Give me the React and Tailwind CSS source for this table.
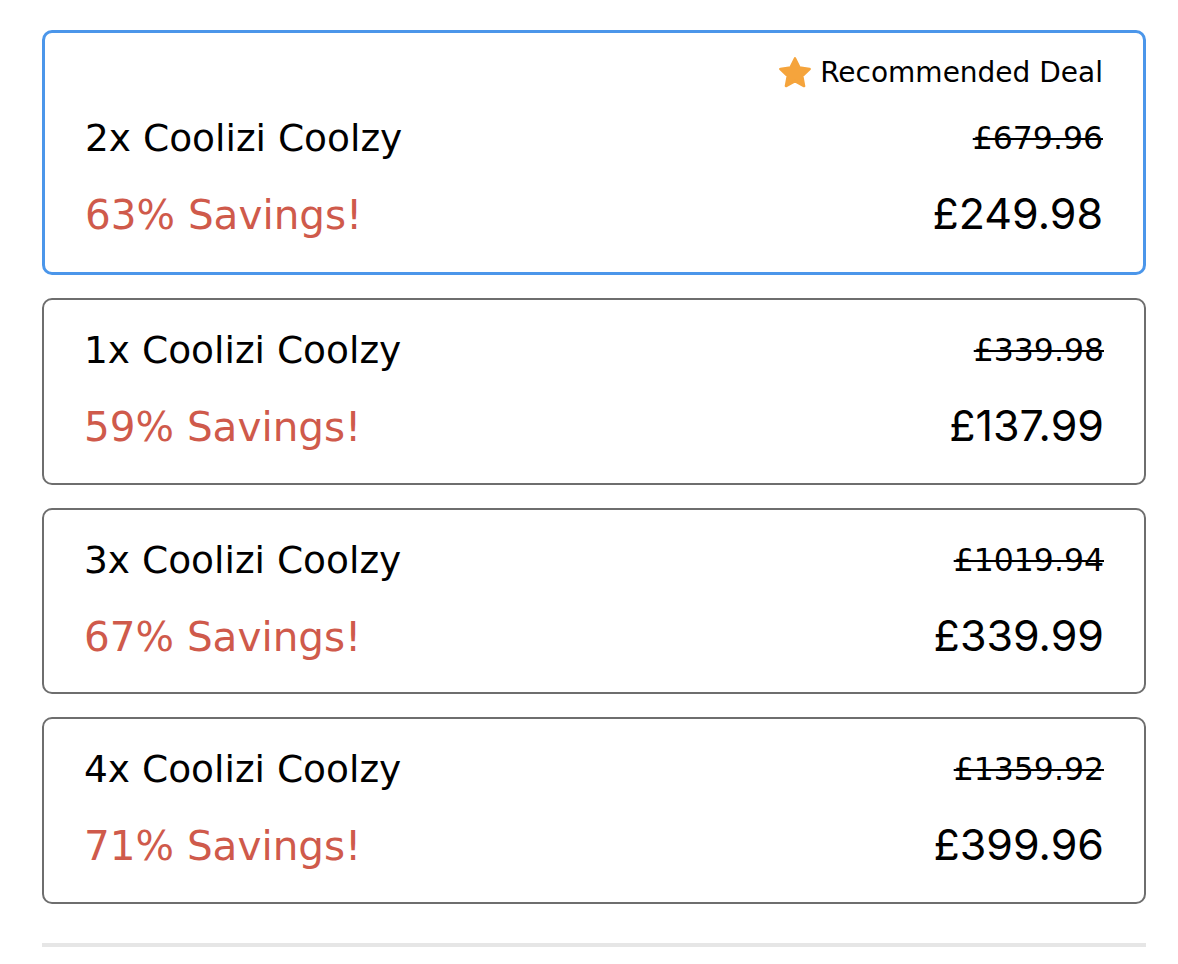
import React from "react";

const deals = [
  { qty: "2x Coolizi Coolzy", old: "£679.96", save: "63% Savings!", price: "£249.98", rec: true },
  { qty: "1x Coolizi Coolzy", old: "£339.98", save: "59% Savings!", price: "£137.99" },
  { qty: "3x Coolizi Coolzy", old: "£1019.94", save: "67% Savings!", price: "£339.99" },
  { qty: "4x Coolizi Coolzy", old: "£1359.92", save: "71% Savings!", price: "£399.96" },
];

const dv = { fontFamily: '"DejaVu Sans", sans-serif' };

function Star() {
  return (
    <svg width="32" height="32" viewBox="2 2 20 20" className="shrink-0">
      <path
        d="M12 2.9l2.8 5.75 6.3.85-4.6 4.38 1.15 6.25L12 17.1l-5.65 3.03 1.15-6.25L2.9 9.5l6.3-.85z"
        fill="#f5a43c"
        stroke="#f5a43c"
        strokeWidth="1.6"
        strokeLinejoin="round"
      />
    </svg>
  );
}

function Card({ d }) {
  return (
    <div
      className={
        d.rec
          ? "border-[3px] border-[#4b96ea] rounded-[10px] px-[40px] pt-[22px] pb-[31px] bg-white"
          : "border-2 border-[#6e6e6e] rounded-[10px] px-[40px] pt-[25px] pb-[29.5px] bg-white"
      }
    >
      {d.rec && (
        <div className="flex justify-end items-center gap-[9px] h-[36px] mb-[22px]">
          <Star />
          <span className="text-[28px] leading-[36px] text-black" style={dv}>
            Recommended Deal
          </span>
        </div>
      )}
      <div className="flex justify-between items-baseline h-[50px]">
        <span className="text-[37.5px] leading-[50px] text-black" style={dv}>
          {d.qty}
        </span>
        <span className="self-start text-[31.5px] leading-[50px] text-black line-through decoration-2" style={dv}>
          {d.old}
        </span>
      </div>
      <div className="flex justify-between items-baseline h-[56px] mt-[22px]">
        <span className="text-[40.5px] leading-[56px] text-[#cf5a4b]" style={dv}>
          {d.save}
        </span>
        <span className="text-[43px] leading-[56px] text-black" style={{ fontFamily: "Inter, sans-serif" }}>
          {d.price}
        </span>
      </div>
    </div>
  );
}

export default function App() {
  return (
    <div className="w-[1178px] min-h-[964px] bg-white pt-[30px]">
      <div className="ml-[42px] w-[1104px] flex flex-col gap-[23px]">
        {deals.map((d) => (
          <Card key={d.qty} d={d} />
        ))}
      </div>
      <div className="ml-[42px] w-[1104px] h-[4px] bg-[#e6e6e6] mt-[39px]" />
    </div>
  );
}
